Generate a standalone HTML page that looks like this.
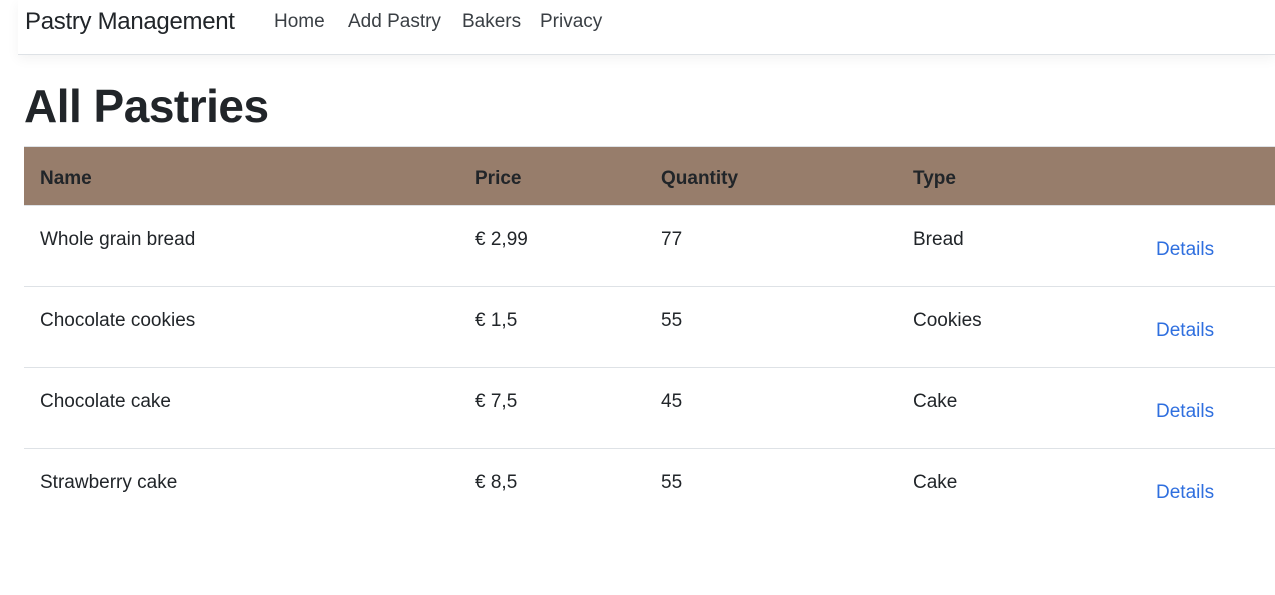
<!DOCTYPE html>
<html><head><meta charset="utf-8"><style>
body{margin:0;background:#fff;font-family:"Liberation Sans",sans-serif;color:#212529;width:1275px;height:595px;overflow:hidden;position:relative}
.nav{position:absolute;left:18px;top:0;width:1257px;height:54px;border-bottom:1px solid #dee2e6;box-shadow:0 4px 12px rgba(0,0,0,.05)}
.brand{position:absolute;left:7px;top:8px;font-size:24px;letter-spacing:-0.3px}
.lk{position:absolute;top:11px;font-size:19px;color:#3a3f44}
h1{position:absolute;left:24px;top:79px;margin:0;font-size:46px;font-weight:bold;letter-spacing:-0.5px}
.th{position:absolute;left:24px;top:146px;width:1251px;height:60px;background:#977d6b;border-top:1px solid #dee2e6;border-bottom:1px solid #dee2e6;box-sizing:border-box}
.th span{position:absolute;top:21px;font-weight:bold;font-size:19px}
.row{position:absolute;left:24px;width:1251px;height:81px;border-bottom:1px solid #dee2e6;box-sizing:border-box}
.row span{position:absolute;top:23px;font-size:19px}
.row a{position:absolute;left:1132px;top:33px;font-size:19px;color:#2f6fdf;text-decoration:none}
</style></head><body>
<div class="nav"><div class="brand">Pastry Management</div>
<span class="lk" style="left:256px">Home</span><span class="lk" style="left:330px">Add Pastry</span><span class="lk" style="left:444px">Bakers</span><span class="lk" style="left:522px">Privacy</span></div>
<h1>All Pastries</h1>
<div class="th"><span style="left:16px">Name</span><span style="left:451px">Price</span><span style="left:637px">Quantity</span><span style="left:889px">Type</span></div>
<div class="row" style="top:206px"><span style="left:16px">Whole grain bread</span><span style="left:451px">€ 2,99</span><span style="left:637px">77</span><span style="left:889px">Bread</span><a>Details</a></div>
<div class="row" style="top:287px"><span style="left:16px">Chocolate cookies</span><span style="left:451px">€ 1,5</span><span style="left:637px">55</span><span style="left:889px">Cookies</span><a>Details</a></div>
<div class="row" style="top:368px"><span style="left:16px">Chocolate cake</span><span style="left:451px">€ 7,5</span><span style="left:637px">45</span><span style="left:889px">Cake</span><a>Details</a></div>
<div class="row" style="top:449px;border-bottom:none"><span style="left:16px">Strawberry cake</span><span style="left:451px">€ 8,5</span><span style="left:637px">55</span><span style="left:889px">Cake</span><a>Details</a></div>
</body></html>
